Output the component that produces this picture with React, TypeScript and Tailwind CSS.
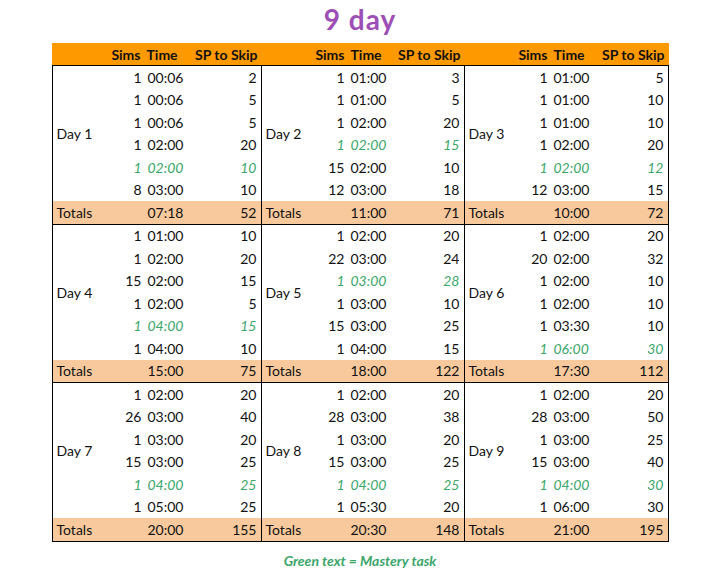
type Row = { sims: number; time: string; sp: number; mastery?: boolean };

type DayData = {
  day: number;
  rows: Row[];
  totalTime: string;
  totalSp: number;
};

const days: DayData[] = [
  {
    day: 1,
    rows: [
      { sims: 1, time: '00:06', sp: 2 },
      { sims: 1, time: '00:06', sp: 5 },
      { sims: 1, time: '00:06', sp: 5 },
      { sims: 1, time: '02:00', sp: 20 },
      { sims: 1, time: '02:00', sp: 10, mastery: true },
      { sims: 8, time: '03:00', sp: 10 },
    ],
    totalTime: '07:18',
    totalSp: 52,
  },
  {
    day: 2,
    rows: [
      { sims: 1, time: '01:00', sp: 3 },
      { sims: 1, time: '01:00', sp: 5 },
      { sims: 1, time: '02:00', sp: 20 },
      { sims: 1, time: '02:00', sp: 15, mastery: true },
      { sims: 15, time: '02:00', sp: 10 },
      { sims: 12, time: '03:00', sp: 18 },
    ],
    totalTime: '11:00',
    totalSp: 71,
  },
  {
    day: 3,
    rows: [
      { sims: 1, time: '01:00', sp: 5 },
      { sims: 1, time: '01:00', sp: 10 },
      { sims: 1, time: '01:00', sp: 10 },
      { sims: 1, time: '02:00', sp: 20 },
      { sims: 1, time: '02:00', sp: 12, mastery: true },
      { sims: 12, time: '03:00', sp: 15 },
    ],
    totalTime: '10:00',
    totalSp: 72,
  },
  {
    day: 4,
    rows: [
      { sims: 1, time: '01:00', sp: 10 },
      { sims: 1, time: '02:00', sp: 20 },
      { sims: 15, time: '02:00', sp: 15 },
      { sims: 1, time: '02:00', sp: 5 },
      { sims: 1, time: '04:00', sp: 15, mastery: true },
      { sims: 1, time: '04:00', sp: 10 },
    ],
    totalTime: '15:00',
    totalSp: 75,
  },
  {
    day: 5,
    rows: [
      { sims: 1, time: '02:00', sp: 20 },
      { sims: 22, time: '03:00', sp: 24 },
      { sims: 1, time: '03:00', sp: 28, mastery: true },
      { sims: 1, time: '03:00', sp: 10 },
      { sims: 15, time: '03:00', sp: 25 },
      { sims: 1, time: '04:00', sp: 15 },
    ],
    totalTime: '18:00',
    totalSp: 122,
  },
  {
    day: 6,
    rows: [
      { sims: 1, time: '02:00', sp: 20 },
      { sims: 20, time: '02:00', sp: 32 },
      { sims: 1, time: '02:00', sp: 10 },
      { sims: 1, time: '02:00', sp: 10 },
      { sims: 1, time: '03:30', sp: 10 },
      { sims: 1, time: '06:00', sp: 30, mastery: true },
    ],
    totalTime: '17:30',
    totalSp: 112,
  },
  {
    day: 7,
    rows: [
      { sims: 1, time: '02:00', sp: 20 },
      { sims: 26, time: '03:00', sp: 40 },
      { sims: 1, time: '03:00', sp: 20 },
      { sims: 15, time: '03:00', sp: 25 },
      { sims: 1, time: '04:00', sp: 25, mastery: true },
      { sims: 1, time: '05:00', sp: 25 },
    ],
    totalTime: '20:00',
    totalSp: 155,
  },
  {
    day: 8,
    rows: [
      { sims: 1, time: '02:00', sp: 20 },
      { sims: 28, time: '03:00', sp: 38 },
      { sims: 1, time: '03:00', sp: 20 },
      { sims: 15, time: '03:00', sp: 25 },
      { sims: 1, time: '04:00', sp: 25, mastery: true },
      { sims: 1, time: '05:30', sp: 20 },
    ],
    totalTime: '20:30',
    totalSp: 148,
  },
  {
    day: 9,
    rows: [
      { sims: 1, time: '02:00', sp: 20 },
      { sims: 28, time: '03:00', sp: 50 },
      { sims: 1, time: '03:00', sp: 25 },
      { sims: 15, time: '03:00', sp: 40 },
      { sims: 1, time: '04:00', sp: 30, mastery: true },
      { sims: 1, time: '06:00', sp: 30 },
    ],
    totalTime: '21:00',
    totalSp: 195,
  },
];

// first block has a slightly wider label column
const colsWide = 'grid-cols-[58px_31px_48px_1fr]';
const colsNarrow = 'grid-cols-[52px_31px_48px_1fr]';

function DayBlock({ data, index }: { data: DayData; index: number }) {
  const cols = index % 3 === 0 ? colsWide : colsNarrow;
  return (
    <div className={`grid ${cols} grid-rows-[repeat(7,22.5px)] ${index % 3 !== 2 ? 'border-r border-black' : ''}`}>
      <div className="row-span-6 flex items-center pl-[4px]">Day {data.day}</div>
      {data.rows.map((r, i) => {
        const tone = r.mastery ? 'text-[#3aa66a] italic' : '';
        return (
          <div key={i} className={`col-span-3 grid grid-cols-subgrid items-center ${tone}`}>
            <span className="text-right">{r.sims}</span>
            <span className="pl-[6px]">{r.time}</span>
            <span className="pr-[4px] text-right">{r.sp}</span>
          </div>
        );
      })}
      <div className="col-span-4 grid grid-cols-subgrid items-center bg-[#f8c99c]">
        <span className="pl-[4px]">Totals</span>
        <span />
        <span className="pl-[6px]">{data.totalTime}</span>
        <span className="pr-[4px] text-right">{data.totalSp}</span>
      </div>
    </div>
  );
}

export default function App() {
  return (
    <div className="flex min-h-[580px] w-[720px] flex-col items-center bg-white font-['Lato','Liberation_Sans',sans-serif] text-[14px] text-[#111111]">
      <h1 className="mt-[2px] h-[38px] text-[28px] font-bold leading-[34px] tracking-[1px] text-[#9d4fb5]">9 day</h1>
      <div className="mt-[3px] w-[617px]">
        <div className="grid h-[22px] grid-cols-[210px_203px_1fr] items-center bg-[#ff9900] font-bold">
          {[0, 1, 2].map((k) => (
            <div key={k} className={`grid ${k === 0 ? colsWide : colsNarrow}`}>
              <span />
              <span className="text-right">Sims</span>
              <span className="pl-[6px]">Time</span>
              <span className="pr-[4px] text-right">SP to Skip</span>
            </div>
          ))}
        </div>
        <div className="border border-black">
          {[0, 1, 2].map((g) => (
            <div
              key={g}
              className={`grid grid-cols-[209px_203px_1fr] ${g < 2 ? 'border-b border-black' : ''}`}
            >
              {days.slice(g * 3, g * 3 + 3).map((d, i) => (
                <DayBlock key={d.day} data={d} index={i} />
              ))}
            </div>
          ))}
        </div>
      </div>
      <p className="mt-[8px] text-[14px] font-bold italic text-[#3aa66a]">Green text = Mastery task</p>
    </div>
  );
}
